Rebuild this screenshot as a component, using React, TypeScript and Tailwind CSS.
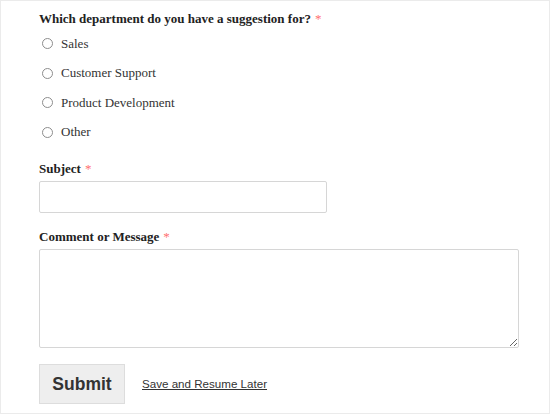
import { useState } from "react";

const departments = ["Sales", "Customer Support", "Product Development", "Other"];

function Required() {
  return <span className="ml-[4px] font-normal text-[#ff6f6f]">*</span>;
}

export default function App() {
  const [dept, setDept] = useState("");
  const [subject, setSubject] = useState("");
  const [message, setMessage] = useState("");

  return (
    <div className="h-[414px] w-[550px] border border-[#ebebeb] bg-white px-[38px] pt-[10px] font-['Liberation_Serif',serif] text-[13px] text-[#222]">
      <form onSubmit={(e) => e.preventDefault()}>
        <fieldset>
          <legend className="leading-[16px] font-bold">
            Which department do you have a suggestion for?
            <Required />
          </legend>
          <div className="mt-[2px] flex flex-col">
            {departments.map((d) => (
              <label key={d} className="flex h-[29.5px] items-center leading-[20px] text-[#333]">
                <input
                  type="radio"
                  name="department"
                  value={d}
                  checked={dept === d}
                  onChange={() => setDept(d)}
                  className="ml-[3px] h-[11px] w-[11px] appearance-none rounded-full border border-[#8d8d8d] bg-white checked:border-[3px] checked:border-[#555]"
                />
                <span className="ml-[8px]">{d}</span>
              </label>
            ))}
          </div>
        </fieldset>

        <label className="mt-[14px] block leading-[16px] font-bold">
          Subject
          <Required />
        </label>
        <input
          type="text"
          value={subject}
          onChange={(e) => setSubject(e.target.value)}
          className="mt-[3.5px] block h-[32px] w-[288px] rounded-[2px] border border-[#d6d6d6] bg-white px-2 outline-none"
        />

        <label className="mt-[16.5px] block leading-[16px] font-bold">
          Comment or Message
          <Required />
        </label>
        <textarea
          value={message}
          onChange={(e) => setMessage(e.target.value)}
          className="mt-[3.5px] block h-[99.5px] w-[480px] rounded-[2px] border border-[#d6d6d6] bg-white px-2 py-1 outline-none"
        />

        <div className="mt-[16px] flex items-center">
          <button
            type="submit"
            className="h-[40px] w-[86px] border border-[#dddddd] bg-[#eeeeee] font-['Liberation_Sans',sans-serif] text-[17.5px] font-bold text-[#333]"
          >
            Submit
          </button>
          <a
            href="#"
            className="ml-[17px] font-['Liberation_Sans',sans-serif] text-[11.6px] text-[#333] underline"
          >
            Save and Resume Later
          </a>
        </div>
      </form>
    </div>
  );
}
